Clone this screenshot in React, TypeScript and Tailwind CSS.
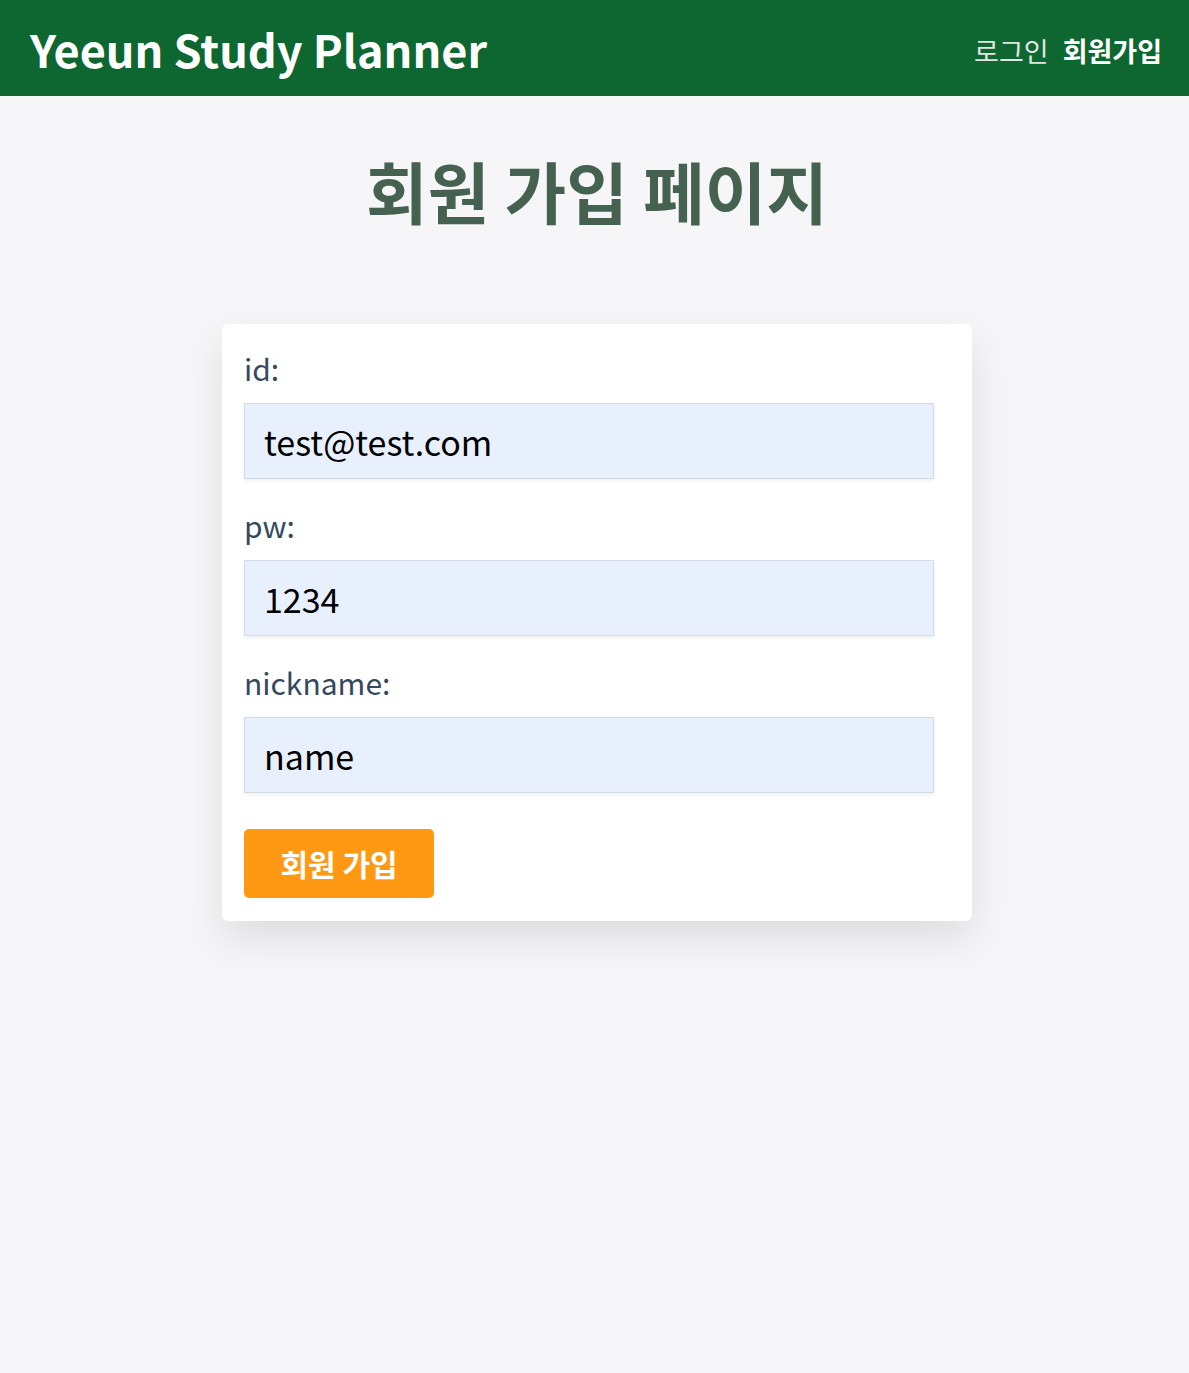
import React, { useState } from 'react';

const FONT = "font-['Noto_Sans_CJK_KR','Noto_Sans',sans-serif]";

const Field: React.FC<{
  label: string;
  value: string;
  onChange: (v: string) => void;
}> = ({ label, value, onChange }) => (
  <div className="flex flex-col">
    <label className="text-[30px] leading-[44px] text-[#34495e]">{label}</label>
    <input
      type="text"
      value={value}
      onChange={(e) => onChange(e.target.value)}
      className="mt-[13px] h-[76px] w-[690px] border border-[#d3dbe6] bg-[#e8f0fe] px-[19px] text-[34px] text-black shadow-[0_2px_4px_rgba(0,0,0,0.06)] outline-none"
    />
  </div>
);

export default function App() {
  const [id, setId] = useState('test@test.com');
  const [pw, setPw] = useState('1234');
  const [nickname, setNickname] = useState('name');

  return (
    <div className={`min-h-screen bg-[#f6f6f8] ${FONT}`}>
      {/* Header */}
      <header className="flex h-[96px] items-center justify-between bg-[#0e6631] pl-[30px] pr-[27px]">
        <h1 className="text-[45px] font-bold leading-none text-white">Yeeun Study Planner</h1>
        <nav className="mt-[6px] flex items-center gap-[14px] text-[27px]">
          <a className="text-[#e0e6e2]">로그인</a>
          <a className="font-bold text-white">회원가입</a>
        </nav>
      </header>

      {/* Content */}
      <main className="flex flex-col items-center pl-[5px]">
        <h2 className="mt-[42px] text-[67px] font-bold leading-[104px] text-[#45614f]">회원 가입 페이지</h2>

        <form
          onSubmit={(e) => e.preventDefault()}
          className="mt-[82px] flex w-[750px] flex-col gap-[24px] rounded-[6px] bg-white px-[22px] pt-[22px] pb-[23px] shadow-[0_18px_40px_rgba(0,0,0,0.1)]"
        >
          <Field label="id:" value={id} onChange={setId} />
          <Field label="pw:" value={pw} onChange={setPw} />
          <Field label="nickname:" value={nickname} onChange={setNickname} />
          <button
            type="submit"
            className="mt-[12px] h-[69px] w-[190px] rounded-[5px] bg-[#ff9914] text-[30px] font-bold text-white"
          >
            회원 가입
          </button>
        </form>
      </main>
    </div>
  );
}
